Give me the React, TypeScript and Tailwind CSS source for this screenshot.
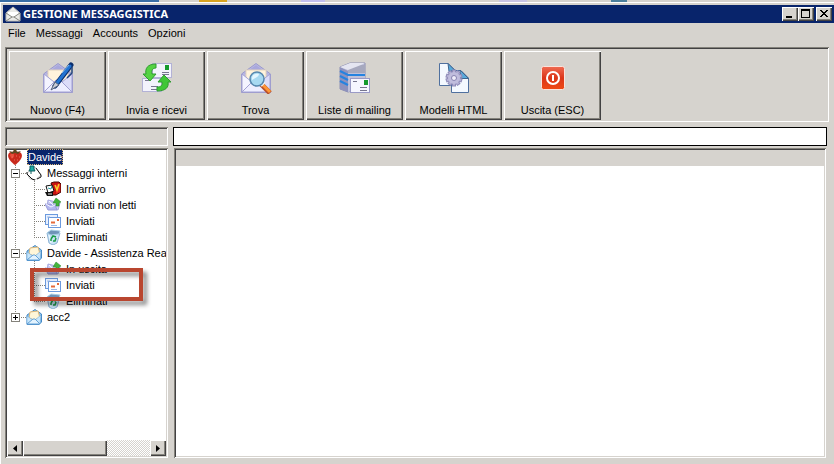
import type { ReactNode } from 'react';

const raised =
  'bg-[#d6d3ce] shadow-[inset_1px_1px_0_#ffffff,inset_-1px_-1px_0_#424142,inset_-2px_-2px_0_#84827b]';
const sunken =
  'shadow-[inset_1px_1px_0_#84827b,inset_-1px_-1px_0_#ffffff,inset_2px_2px_0_#424142,inset_-2px_-2px_0_#d6d3ce]';

/* ---------- Toolbar icons, 32 x 32 ---------- */

function Envelope() {
  return (
    <>
      <path d="M1.500 12 L16 1.500 L30.500 12 V30.500 H1.500 Z" fill="#b9b8e4" stroke="#9a99cc" />
      <path d="M4 12 L16 3 L28 12 Z" fill="#a9a8dc" />
      <path d="M6 8 H26 V20 L16 25 L6 20 Z" fill="#fff3dc" stroke="#e2d3bd" />
      <path d="M2 12 L12 20 L2 30 Z" fill="#f4f4ff" stroke="#a3a2d2" />
      <path d="M30 12 L20 20 L30 30 Z" fill="#dcdcf8" stroke="#a3a2d2" />
      <path d="M2 30 L14 18 H18 L30 30 Z" fill="#eeeeff" stroke="#a3a2d2" />
    </>
  );
}

function NewIcon() {
  return (
    <svg width="32" height="32" viewBox="0 0 32 32" aria-hidden="true">
      <Envelope />
      <path d="M29 3 L13 24" stroke="#0b2f6e" strokeWidth="5" strokeLinecap="round" />
      <path d="M28 4 L15 21" stroke="#2273d2" strokeWidth="3" strokeLinecap="round" />
      <path d="M27 3 L20 11" stroke="#7db8f2" strokeWidth="1" />
      <path d="M30 5 L30 11 L25 16" fill="none" stroke="#22457c" strokeWidth="1.500" />
      <path d="M13 20 L17 23 L9 28 Z" fill="#c9ccd6" stroke="#53607c" />
    </svg>
  );
}

function SendReceiveIcon() {
  return (
    <svg width="32" height="32" viewBox="0 0 32 32" aria-hidden="true">
      <rect x="11.500" y="1.500" width="19" height="14" fill="#f3f3fc" stroke="#b3b2d6" />
      <rect x="24" y="3" width="4" height="5" fill="#159a2d" />
      <path d="M21 10.500 H28 M21 12.500 H28" stroke="#77768f" />
      <rect x="1.500" y="16.500" width="19" height="13" fill="#f3f3fc" stroke="#b3b2d6" />
      <path d="M4 18.500 H8 M10 24.500 H17 M10 27.500 H17" stroke="#77768f" />
      <path d="M15 2 C6 2 4 7 5 12 H2 L9 19 L15 12 H11 C10 8 12 6 15 6 Z" fill="#55d243" stroke="#2f9c30" />
      <path d="M16 29 C25 29 28 25 27 20 H30 L23 13 L17 20 H21 C22 23 20 25 16 25 Z" fill="#3fc737" stroke="#2f9c30" />
    </svg>
  );
}

function FindIcon() {
  return (
    <svg width="32" height="32" viewBox="0 0 32 32" aria-hidden="true">
      <Envelope />
      <path d="M21 22 L30 31" stroke="#b8502c" strokeWidth="5" />
      <path d="M21 21 L30 30" stroke="#ff9736" strokeWidth="3" />
      <path d="M21 24 L25 20" stroke="#eef1f7" strokeWidth="2" />
      <circle cx="17" cy="17" r="7" fill="#a7d9f1" stroke="#5687ae" strokeWidth="1.500" />
      <path d="M12 16 C12 12 16 11 19 12 C19 15 15 16 12 18 Z" fill="#e3f6ff" />
    </svg>
  );
}

function MailingListIcon() {
  return (
    <svg width="32" height="32" viewBox="0 0 32 32" aria-hidden="true">
      <path d="M1 5 L11 1 H26 V26 L9 30 L1 27 Z" fill="#b9bbd6" stroke="#8c8eb2" />
      <path d="M1 5 L9 9 V30 L1 27 Z" fill="#8f92bd" />
      <path d="M9 9 H26 V26 L9 30 Z" fill="#bfc1da" />
      <path d="M9 3 H26 V11 H9 Z" fill="#a6a8be" />
      <path d="M1 5 L11 1 H26 L22 3 L9 8 Z" fill="#e4e5f1" />
      <path d="M1 9 L9 13 H26" fill="none" stroke="#2583e0" strokeWidth="2" />
      <path d="M1 14 L9 18 M1 19 L9 23" fill="none" stroke="#2583e0" strokeWidth="2" />
      <rect x="11.500" y="16.500" width="19" height="14" fill="#f6f6ff" stroke="#9a9ac6" />
      <rect x="25" y="18" width="4" height="5" fill="#159a2d" />
      <path d="M14 19.500 H18 M21 25.500 H28 M21 28.500 H28" stroke="#77768f" />
    </svg>
  );
}

function TemplateIcon() {
  const teeth = [0, 36, 72, 108, 144, 180, 216, 252, 288, 324];
  return (
    <svg width="32" height="32" viewBox="0 0 32 32" aria-hidden="true">
      <path d="M1.500 1.500 H10 L18 9 V23.500 H1.500 Z" fill="#f4f9ff" stroke="#50709f" />
      <path d="M10 1.500 L18 9.500 H11 Z" fill="#58aadb" stroke="#40658f" />
      <path d="M13.500 8.500 H23 L30.500 16 V30.500 H13.500 Z" fill="#f4f9ff" stroke="#50709f" />
      <path d="M22 8 L30.500 16.500 H23 Z" fill="#58aadb" stroke="#40658f" />
      {teeth.map((angle) => (
        <rect key={angle} x="14.500" y="8" width="3" height="5" fill="#b3b0d4" stroke="#8f8bb8" transform={`rotate(${angle} 16 16)`} />
      ))}
      <circle cx="16" cy="16" r="6" fill="#c0bddd" />
      <circle cx="16" cy="16" r="2.500" fill="#efedf9" stroke="#8783b0" />
    </svg>
  );
}

function ExitIcon() {
  return (
    <svg width="32" height="32" viewBox="0 0 32 32" aria-hidden="true">
      <defs>
        <linearGradient id="exit-red" x1="0" y1="0" x2="0" y2="1">
          <stop offset="0" stopColor="#ef6b52" />
          <stop offset="0.500" stopColor="#dc3519" />
          <stop offset="1" stopColor="#ef4a14" />
        </linearGradient>
      </defs>
      <rect x="4.500" y="4.500" width="23" height="23" rx="2" fill="url(#exit-red)" stroke="#fbe3dc" />
      <circle cx="16" cy="16" r="6" fill="none" stroke="#ffffff" strokeWidth="2" />
      <path d="M16 13 V19" stroke="#ffffff" strokeWidth="2" />
    </svg>
  );
}

/* ---------- Tree icons, 16 x 16 ---------- */

function StrawberryIcon() {
  return (
    <svg width="16" height="16" viewBox="0 0 16 16" aria-hidden="true">
      <path d="M2 4 C4 2 12 2 14 4 C17 8 12 13 8 16 C4 13 -1 8 2 4 Z" fill="#c92a1c" />
      <path d="M3 6 C4 4 7 4 7 6 C7 9 5 10 4 9 Z" fill="#e8503c" />
      <path d="M2 2 L6 3 L7 0 H9 L10 3 L14 2 L11 5 L8 4 L5 5 Z" fill="#5d4a22" />
      <path d="M5 8h1M9 7h1M12 8h1M7 11h1M10 11h1" stroke="#e8705a" />
    </svg>
  );
}

function NoteIcon() {
  return (
    <svg width="16" height="16" viewBox="0 0 16 16" aria-hidden="true">
      <path d="M4 4 L9 2 L15 10 L9 15 L4 14 L1 9 Z" fill="#ffffff" stroke="#c4c4c4" />
      <path d="M1 7 V9 L6 14 L9 15 M10 3 L15 10 V12 L11 14" fill="none" stroke="#111111" />
      <path d="M4 1 H8 V4 L9 6 H3 L4 4 Z" fill="#1faba5" stroke="#0d5d5c" />
      <path d="M5 6 V9" stroke="#0d5d5c" />
    </svg>
  );
}

function InboxIcon() {
  return (
    <svg width="16" height="16" viewBox="0 0 16 16" aria-hidden="true">
      <path d="M6 2 L9 1 H14 L16 3 V11 L11 14 H7 V5 Z" fill="#c8130f" stroke="#4c0805" />
      <path d="M11 5 C12 2 15 3 15 5 V11 L11 13 Z" fill="#ea2a20" />
      <path d="M10 4 L12 9 L14 3" fill="none" stroke="#f8cf2c" strokeWidth="1.500" />
      <path d="M1 5 L7 4 L9 10 L3 12 Z" fill="#ffffff" stroke="#111111" />
      <path d="M0 11 H8 V15 H2 Z" fill="#111111" />
      <path d="M3 13 H7" stroke="#e9e9e9" />
      <path d="M3 7 L6 8 L7 5" fill="none" stroke="#2a9ea6" />
    </svg>
  );
}

function OutgoingIcon() {
  return (
    <svg width="16" height="16" viewBox="0 0 16 16" aria-hidden="true">
      <path d="M3 3 L15 6 L13 13 L2 10 Z" fill="#c9cbf3" stroke="#a6a8de" />
      <path d="M0 7 L10 8 L12 13 L3 13 Z" fill="#b4b8f0" stroke="#9a9dda" />
      <path d="M1 7 L6 10 L10 8 M4 4 L8 8" fill="none" stroke="#f6f6ff" />
      <path d="M11 1 L16 5 L14 6 V9 H11 V6 H8 Z" fill="#44b53c" stroke="#23802a" strokeWidth="0.500" />
    </svg>
  );
}

function SentIcon() {
  return (
    <svg width="16" height="16" viewBox="0 0 16 16" aria-hidden="true">
      <rect x="0.500" y="1.500" width="12" height="10" fill="#e9f1ff" stroke="#6c9add" />
      <rect x="3.500" y="4.500" width="12" height="10" fill="#ffffff" stroke="#6c9add" />
      <path d="M2 4h3" stroke="#9bb8e4" />
      <path d="M6 9.500h4" stroke="#e56a3a" strokeWidth="2" />
      <rect x="12" y="6" width="2" height="2" fill="#e56a3a" />
      <path d="M6 12.500h6" stroke="#9bb8e4" />
    </svg>
  );
}

function BinIcon() {
  return (
    <svg width="16" height="16" viewBox="0 0 16 16" aria-hidden="true">
      <path d="M2 4 L15 4 L12 14 L8 16 L4 14 Z" fill="#c8e2f6" stroke="#8db4d6" />
      <path d="M2 4 L6 1 L15 2 L14 5 L6 6 Z" fill="#6f93b8" stroke="#a9cfe6" />
      <path d="M4 6 L6 14" stroke="#effaff" />
      <path d="M6 10 L8 7 L11 8 M11 9 L10 12 L8 12 M6 10 L6 12" fill="none" stroke="#199b46" strokeWidth="1.500" />
    </svg>
  );
}

function OpenMailIcon() {
  return (
    <svg width="16" height="16" viewBox="0 0 16 16" aria-hidden="true">
      <path d="M1 6 L9 0.500 L15.500 5 V13 L13 15.500 H1 Z" fill="#8bc4ef" stroke="#4689c4" />
      <path d="M4 3 L12 2 L14 9 L8 11 L3 9 Z" fill="#fff6d8" stroke="#e0b878" />
      <path d="M1 7 L7 11 L1 15 Z M15 6 L9 11 L14 15 Z" fill="#c8e6fb" stroke="#63a1d6" strokeWidth="0.500" />
      <path d="M1 15 L7 10 H9 L14 15 Z" fill="#e3f3fe" stroke="#63a1d6" />
    </svg>
  );
}

function TitleMailIcon() {
  return (
    <svg width="16" height="16" viewBox="0 0 16 16" aria-hidden="true">
      <path d="M1 7 L8 1 L15 7 V15 H1 Z" fill="#e9e9e6" stroke="#bfbfbb" />
      <path d="M3 6 H13 V9 L8 12 L3 9 Z" fill="#ffffff" />
      <path d="M1 7 L7 11 L1 15 M15 7 L9 11 L15 15 M7 11 H9" fill="none" stroke="#85857f" />
    </svg>
  );
}

/* ---------- Tree ---------- */

type GuideKind = 'line' | 'tee' | 'end' | 'minus' | 'plus';

function Guide({ kind }: { kind: GuideKind }) {
  const stops = kind === 'end' || kind === 'plus';
  return (
    <svg className="shrink-0" width="19" height="16" viewBox="0 0 19 16" aria-hidden="true">
      <path d={stops ? 'M8.500 0 V9' : 'M8.500 0 V16'} stroke="#84827b" strokeDasharray="1 1" />
      {kind !== 'line' && <path d="M8 8.500 H19" stroke="#84827b" strokeDasharray="1 1" />}
      {(kind === 'minus' || kind === 'plus') && (
        <>
          <rect x="4.500" y="4.500" width="8" height="8" fill="#ffffff" stroke="#84827b" />
          <path d="M6 8.500 H11" stroke="#000000" />
        </>
      )}
      {kind === 'plus' && <path d="M8.500 6 V11" stroke="#000000" />}
    </svg>
  );
}

interface Row {
  label: string;
  level: number;
  guides: GuideKind[];
  icon: ReactNode;
  selected?: boolean;
}

const rows: Row[] = [
  { label: 'Davide', level: 1, guides: [], icon: <StrawberryIcon />, selected: true },
  { label: 'Messaggi interni', level: 2, guides: ['minus'], icon: <NoteIcon /> },
  { label: 'In arrivo', level: 3, guides: ['line', 'tee'], icon: <InboxIcon /> },
  { label: 'Inviati non letti', level: 3, guides: ['line', 'tee'], icon: <OutgoingIcon /> },
  { label: 'Inviati', level: 3, guides: ['line', 'tee'], icon: <SentIcon /> },
  { label: 'Eliminati', level: 3, guides: ['line', 'end'], icon: <BinIcon /> },
  { label: 'Davide - Assistenza Reac', level: 2, guides: ['minus'], icon: <OpenMailIcon /> },
  { label: 'In uscita', level: 3, guides: ['line', 'tee'], icon: <OutgoingIcon /> },
  { label: 'Inviati', level: 3, guides: ['line', 'tee'], icon: <SentIcon /> },
  { label: 'Eliminati', level: 3, guides: ['line', 'end'], icon: <BinIcon /> },
  { label: 'acc2', level: 2, guides: ['plus'], icon: <OpenMailIcon /> },
];

function FolderTree() {
  return (
    <div className="relative min-h-0 flex-1 overflow-hidden">
      <ul role="tree" aria-label="Cartelle">
        {rows.map((row, i) => (
          <li key={i} role="treeitem" aria-level={row.level} aria-selected={!!row.selected} className="flex h-4 items-center whitespace-nowrap">
            {row.guides.map((kind, g) => (
              <Guide key={g} kind={kind} />
            ))}
            <span className="shrink-0">{row.icon}</span>
            <button
              type="button"
              className={
                row.selected
                  ? 'ml-1 h-4 border border-dotted border-[#d8b878] bg-[#08246b] leading-[14px] text-white'
                  : 'ml-1 h-4 border border-transparent leading-[14px]'
              }
            >
              {row.label}
            </button>
          </li>
        ))}
      </ul>
      <div className="pointer-events-none absolute top-[119px] left-[23px] h-[33px] w-[113px] border-4 border-[#b9462f] drop-shadow-[4px_4px_2px_rgba(0,0,0,0.45)]" />
    </div>
  );
}

function ScrollBar() {
  return (
    <div className="flex h-4 bg-[repeating-conic-gradient(#ffffff_0_25%,#d6d3ce_0_50%)] bg-size-[2px_2px]">
      <button type="button" aria-label="Scorri a sinistra" className={`flex w-4 items-center justify-center ${raised}`}>
        <svg width="4" height="7" viewBox="0 0 4 7"><path d="M4 0 V7 L0 3.500 Z" /></svg>
      </button>
      <div className={`w-[84px] ${raised}`} />
      <div className="flex-1" />
      <button type="button" aria-label="Scorri a destra" className={`flex w-4 items-center justify-center ${raised}`}>
        <svg width="4" height="7" viewBox="0 0 4 7"><path d="M0 0 V7 L4 3.500 Z" /></svg>
      </button>
    </div>
  );
}

/* ---------- Window ---------- */

const tools: { label: string; icon: ReactNode }[] = [
  { label: 'Nuovo (F4)', icon: <NewIcon /> },
  { label: 'Invia e ricevi', icon: <SendReceiveIcon /> },
  { label: 'Trova', icon: <FindIcon /> },
  { label: 'Liste di mailing', icon: <MailingListIcon /> },
  { label: 'Modelli HTML', icon: <TemplateIcon /> },
  { label: 'Uscita (ESC)', icon: <ExitIcon /> },
];

function TitleBar() {
  const box = `flex h-[14px] w-4 items-center justify-center ${raised}`;
  return (
    <header className="ml-0.5 flex h-[18px] items-center bg-[#08246b] pr-0.5 pl-0.5">
      <TitleMailIcon />
      <h1 className="ml-0.5 flex-1 font-['Noto_Sans','Open_Sans',sans-serif] text-[11px] leading-4 font-bold text-white">
        GESTIONE MESSAGGISTICA
      </h1>
      <button type="button" aria-label="Riduci a icona" className={box}>
        <svg width="12" height="10" viewBox="0 0 12 10"><path d="M2 7h6v2H2z" /></svg>
      </button>
      <button type="button" aria-label="Ingrandisci" className={box}>
        <svg width="12" height="10" viewBox="0 0 12 10"><path d="M1 0h9v9H1z M2 2v6h7V2z" fillRule="evenodd" /></svg>
      </button>
      <button type="button" aria-label="Chiudi" className={`ml-0.5 ${box}`}>
        <svg width="12" height="10" viewBox="0 0 12 10" shapeRendering="crispEdges"><path d="M2 1h2v1h1v1h2V2h1V1h2v1H9v1H8v1H7v1h1v1h1v1h1v1H8V7H7V6H5v1H4v1H2V7h1V6h1V5h1V4H4V3H3V2H2z" /></svg>
      </button>
    </header>
  );
}

export default function App() {
  return (
    <div className="flex h-screen flex-col bg-[#d6d3ce] font-['Liberation_Sans',Arial,sans-serif] text-[11px] text-black">
      <div className="flex h-0.5 shrink-0">
        <div className="w-[159px] bg-[#3a6ea5]" />
        <div className="ml-10 w-7 bg-[#d9a420]" />
        <div className="ml-[74px] w-6 bg-[#c3c0ee]" />
        <div className="ml-[174px] w-7 bg-[#c9c5e4]" />
        <div className="ml-[84px] w-4 bg-[#4c7f9c]" />
      </div>
      <main className="flex min-h-0 flex-1 flex-col border-t border-l border-white pt-0.5">
        <TitleBar />
        <nav aria-label="Menu" className="flex h-6 items-center gap-2.5 pb-1 pl-[7px]">
          {['File', 'Messaggi', 'Accounts', 'Opzioni'].map((item) => (
            <button key={item} type="button" className="leading-4">
              {item}
            </button>
          ))}
        </nav>

        <div role="toolbar" aria-label="Strumenti" className={`mr-[5px] ml-1 flex gap-0.5 pt-1 pr-1 pb-0.5 pl-1 ${sunken}`}>
          {tools.map((tool) => (
            <button
              key={tool.label}
              type="button"
              className={`flex h-[69px] w-[97px] flex-col items-center gap-2 pt-[11px] leading-4 ${raised}`}
            >
              {tool.icon}
              <span>{tool.label}</span>
            </button>
          ))}
        </div>

        <div className="flex min-h-0 flex-1 gap-[5px] pt-[5px] pr-[7px] pb-1.5 pl-1">
          <aside className="flex w-[163px] flex-col gap-0.5">
            <div className={`h-[19px] ${sunken}`} />
            <div className={`flex min-h-0 flex-1 flex-col bg-white px-0.5 pt-px pb-0.5 ${sunken}`}>
              <FolderTree />
              <ScrollBar />
            </div>
          </aside>
          <section className="flex flex-1 flex-col gap-0.5">
            <input type="text" aria-label="Oggetto" className="h-[19px] border border-black bg-white px-1 outline-none" />
            <div className={`mr-px ml-px flex flex-1 flex-col bg-white p-0.5 ${sunken}`}>
              <div className="h-4 bg-[#d6d3ce]" />
            </div>
          </section>
        </div>
      </main>
    </div>
  );
}
